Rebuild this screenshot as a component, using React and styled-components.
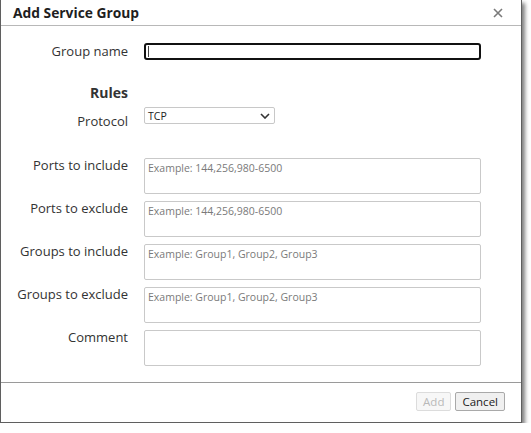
import React from "react";
import styled, { createGlobalStyle } from "styled-components";

const GlobalStyle = createGlobalStyle`
  html, body {
    margin: 0;
    padding: 0;
    background: #ffffff;
  }
  body {
    font-family: "Open Sans", "Noto Sans", sans-serif;
  }
`;

const Dialog = styled.div`
  width: 522px;
  height: 423px;
  box-sizing: border-box;
  border: 1px solid #5f5f5f;
  border-top: none;
  background: #ffffff;
  box-shadow: 3px 3px 4px rgba(0, 0, 0, 0.5);
  display: flex;
  flex-direction: column;
`;

const Header = styled.div`
  height: 26px;
  box-sizing: border-box;
  border-bottom: 1px solid #b8b8b8;
  display: flex;
  align-items: center;
  justify-content: space-between;
  padding: 0 18px 0 12px;
`;

const Title = styled.h1`
  margin: 0;
  font-size: 13.8px;
  font-weight: 700;
  color: #1e1e1e;
`;

const CloseButton = styled.button`
  border: none;
  background: none;
  padding: 0;
  width: 10px;
  height: 10px;
  display: flex;
  cursor: pointer;
`;

const Body = styled.div`
  flex: 1;
  padding-top: 17px;
`;

const Row = styled.div`
  display: flex;
  align-items: flex-start;
  margin-top: ${(props) => props.gap || 0}px;
`;

const Label = styled.label`
  width: 127px;
  flex-shrink: 0;
  margin-right: 16px;
  padding-top: ${(props) => props.offset || 0}px;
  text-align: right;
  font-size: ${(props) => (props.heading ? 14 : 13)}px;
  line-height: 14px;
  color: #333333;
  font-weight: ${(props) => (props.heading ? 700 : 400)};
`;

const NameField = styled.div`
  width: 337px;
  height: 17px;
  box-sizing: border-box;
  border: 2px solid #111111;
  border-radius: 3px;
  display: flex;
  align-items: center;
  padding-left: 2px;
`;

const Caret = styled.span`
  width: 1px;
  height: 11px;
  background: #444;
`;

const SelectBox = styled.div`
  width: 131px;
  height: 17px;
  box-sizing: border-box;
  border: 1px solid #c8c8c8;
  border-radius: 2px;
  display: flex;
  align-items: center;
  justify-content: space-between;
  padding: 0 4px 0 3px;
  font-size: 10.5px;
  color: #222;
`;

const TextArea = styled.textarea`
  width: 337px;
  height: 36px;
  box-sizing: border-box;
  border: 1px solid #c9c9c9;
  border-radius: 2px;
  padding: 2px 3px;
  margin: 0;
  resize: none;
  font-family: "Open Sans", "Noto Sans", sans-serif;
  font-size: 10.5px;
  line-height: 14px;
  color: #333;
  outline: none;
  &::placeholder {
    color: #7a7a7a;
  }
`;

const Footer = styled.div`
  height: 40px;
  box-sizing: border-box;
  border-top: 1px solid #9a9a9a;
  display: flex;
  justify-content: flex-end;
  align-items: flex-start;
  gap: 4px;
  padding: 9px 16px 0 0;
`;

const Button = styled.button`
  height: 19px;
  box-sizing: border-box;
  padding: 0 6px;
  border-radius: 2px;
  font-family: "Open Sans", "Noto Sans", sans-serif;
  font-size: 11.5px;
  line-height: 17px;
  border: 1px solid ${(props) => (props.disabled ? "#dcdcdc" : "#a9a9a9")};
  background: ${(props) => (props.disabled ? "#f7f7f7" : "#f0f0f0")};
  color: ${(props) => (props.disabled ? "#b9b9b9" : "#222")};
`;

const textRows = [
  { label: "Ports to include", placeholder: "Example: 144,256,980-6500", gap: 30 },
  { label: "Ports to exclude", placeholder: "Example: 144,256,980-6500", gap: 7 },
  { label: "Groups to include", placeholder: "Example: Group1, Group2, Group3", gap: 7 },
  { label: "Groups to exclude", placeholder: "Example: Group1, Group2, Group3", gap: 7 },
  { label: "Comment", placeholder: "", gap: 7 },
];

export default function App() {
  return (
    <>
      <GlobalStyle />
      <Dialog>
        <Header>
          <Title>Add Service Group</Title>
          <CloseButton aria-label="Close">
            <svg width="10" height="10" viewBox="0 0 10 10">
              <path d="M1 1 L9 9 M9 1 L1 9" stroke="#7a7a7a" strokeWidth="1.6" />
            </svg>
          </CloseButton>
        </Header>
        <Body>
          <Row>
            <Label offset={1}>Group name</Label>
            <NameField>
              <Caret />
            </NameField>
          </Row>
          <Row gap={26}>
            <Label heading>Rules</Label>
          </Row>
          <Row gap={7}>
            <Label offset={7}>Protocol</Label>
            <SelectBox>
              <span>TCP</span>
              <svg width="10" height="6" viewBox="0 0 10 6">
                <path d="M1 1 L5 5 L9 1" fill="none" stroke="#333" strokeWidth="1.6" />
              </svg>
            </SelectBox>
          </Row>
          {textRows.map((row) => (
            <Row key={row.label} gap={row.gap}>
              <Label>{row.label}</Label>
              <TextArea placeholder={row.placeholder} />
            </Row>
          ))}
        </Body>
        <Footer>
          <Button disabled>Add</Button>
          <Button>Cancel</Button>
        </Footer>
      </Dialog>
    </>
  );
}
